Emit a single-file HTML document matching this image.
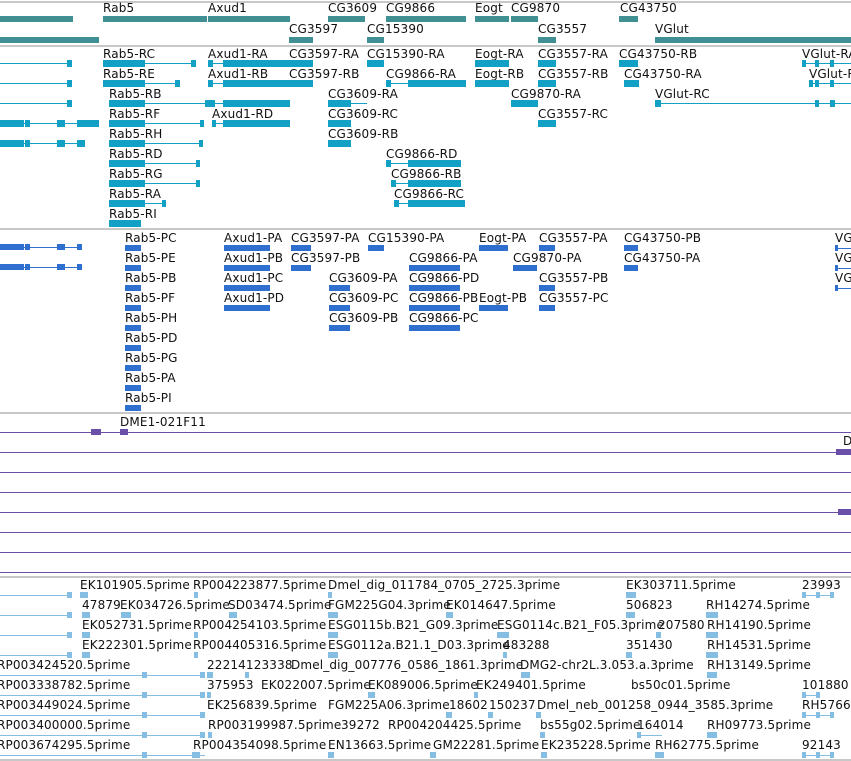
<!DOCTYPE html>
<html><head><meta charset="utf-8"><style>
html,body{margin:0;padding:0;background:#fff;}
body{width:851px;height:761px;position:relative;overflow:hidden;font-family:"DejaVu Sans","Liberation Sans",sans-serif;font-size:12px;color:#111;}
.t{position:absolute;line-height:14px;white-space:nowrap;letter-spacing:0.15px;}
i{position:absolute;display:block;}
.s{left:0;width:851px;height:2px;background:#c8c8c8;}
.g{background:#3f8f93;height:6px;}
.tl{background:#12a0c4;height:1px;}
.tb{background:#12a0c4;height:7px;}
.cl{background:#2f6fd0;height:1px;}
.cb{background:#2f6fd0;height:6px;}
.pl{background:#6a4fa8;height:1px;}
.pb{background:#6a4fa8;height:6px;}
.el{background:#86bde2;height:1px;}
.eb{background:#86bde2;height:6px;}
</style></head><body>
<i class="s" style="top:1px"></i>
<i class="s" style="top:45px"></i>
<i class="s" style="top:228px"></i>
<i class="s" style="top:412px"></i>
<i class="s" style="top:576px"></i>
<i class="s" style="top:759px"></i>

<div class="t" style="left:103px;top:1px">Rab5</div>
<div class="t" style="left:208px;top:1px">Axud1</div>
<div class="t" style="left:328px;top:1px">CG3609</div>
<div class="t" style="left:386px;top:1px">CG9866</div>
<div class="t" style="left:475px;top:1px">Eogt</div>
<div class="t" style="left:511px;top:1px">CG9870</div>
<div class="t" style="left:620px;top:1px">CG43750</div>
<i class="g" style="left:0;top:16px;width:73px"></i>
<i class="g" style="left:103px;top:16px;width:104px"></i>
<i class="g" style="left:208px;top:16px;width:82px"></i>
<i class="g" style="left:328px;top:16px;width:37px"></i>
<i class="g" style="left:386px;top:16px;width:80px"></i>
<i class="g" style="left:475px;top:16px;width:34px"></i>
<i class="g" style="left:511px;top:16px;width:27px"></i>
<i class="g" style="left:619px;top:16px;width:19px"></i>
<div class="t" style="left:289px;top:22px">CG3597</div>
<div class="t" style="left:367px;top:22px">CG15390</div>
<div class="t" style="left:538px;top:22px">CG3557</div>
<div class="t" style="left:655px;top:22px">VGlut</div>
<i class="g" style="left:0;top:37px;width:99px"></i>
<i class="g" style="left:289px;top:37px;width:24px"></i>
<i class="g" style="left:367px;top:37px;width:17px"></i>
<i class="g" style="left:538px;top:37px;width:18px"></i>
<i class="g" style="left:655px;top:37px;width:196px"></i>

<i class="tl" style="left:0;top:63px;width:72px"></i><i class="tb" style="left:67px;top:60px;width:5px"></i>
<div class="t" style="left:103px;top:47px">Rab5-RC</div><i class="tb" style="left:103px;top:60px;width:42px"></i><i class="tl" style="left:103px;top:63px;width:93px"></i><i class="tb" style="left:191px;top:60px;width:5px"></i>
<div class="t" style="left:208px;top:47px">Axud1-RA</div><i class="tl" style="left:208px;top:63px;width:15px"></i><i class="tb" style="left:208px;top:60px;width:5px"></i><i class="tb" style="left:223px;top:60px;width:67px"></i>
<div class="t" style="left:289px;top:47px">CG3597-RA</div><i class="tb" style="left:289px;top:60px;width:24px"></i>
<div class="t" style="left:367px;top:47px">CG15390-RA</div><i class="tb" style="left:367px;top:60px;width:17px"></i>
<div class="t" style="left:475px;top:47px">Eogt-RA</div><i class="tb" style="left:475px;top:60px;width:34px"></i>
<div class="t" style="left:538px;top:47px">CG3557-RA</div><i class="tb" style="left:538px;top:60px;width:18px"></i>
<div class="t" style="left:619px;top:47px">CG43750-RB</div><i class="tb" style="left:619px;top:60px;width:19px"></i>
<div class="t" style="left:802px;top:47px">VGlut-RA</div><i class="tl" style="left:802px;top:63px;width:49px"></i><i class="tb" style="left:802px;top:60px;width:4px"></i><i class="tb" style="left:815px;top:60px;width:4px"></i><i class="tb" style="left:830px;top:60px;width:4px"></i>
<i class="tl" style="left:0;top:83px;width:72px"></i><i class="tb" style="left:67px;top:80px;width:5px"></i>
<div class="t" style="left:103px;top:67px">Rab5-RE</div><i class="tb" style="left:103px;top:80px;width:42px"></i><i class="tl" style="left:103px;top:83px;width:77px"></i><i class="tb" style="left:175px;top:80px;width:5px"></i>
<div class="t" style="left:208px;top:67px">Axud1-RB</div><i class="tl" style="left:208px;top:83px;width:15px"></i><i class="tb" style="left:208px;top:80px;width:5px"></i><i class="tb" style="left:223px;top:80px;width:67px"></i>
<div class="t" style="left:289px;top:67px">CG3597-RB</div><i class="tb" style="left:289px;top:80px;width:24px"></i>
<div class="t" style="left:386px;top:67px">CG9866-RA</div><i class="tl" style="left:386px;top:83px;width:80px"></i><i class="tb" style="left:386px;top:80px;width:5px"></i><i class="tb" style="left:408px;top:80px;width:58px"></i>
<div class="t" style="left:475px;top:67px">Eogt-RB</div><i class="tb" style="left:475px;top:80px;width:34px"></i>
<div class="t" style="left:538px;top:67px">CG3557-RB</div><i class="tb" style="left:538px;top:80px;width:18px"></i>
<div class="t" style="left:624px;top:67px">CG43750-RA</div><i class="tb" style="left:624px;top:80px;width:15px"></i>
<div class="t" style="left:809px;top:67px">VGlut-RB</div><i class="tl" style="left:809px;top:83px;width:42px"></i><i class="tb" style="left:809px;top:80px;width:4px"></i><i class="tb" style="left:815px;top:80px;width:4px"></i><i class="tb" style="left:830px;top:80px;width:4px"></i>
<i class="tl" style="left:0;top:103px;width:72px"></i><i class="tb" style="left:67px;top:100px;width:5px"></i>
<div class="t" style="left:109px;top:87px">Rab5-RB</div><i class="tl" style="left:109px;top:103px;width:181px"></i><i class="tb" style="left:109px;top:100px;width:36px"></i><i class="tb" style="left:205px;top:100px;width:10px"></i><i class="tb" style="left:223px;top:100px;width:67px"></i>
<div class="t" style="left:328px;top:87px">CG3609-RA</div><i class="tl" style="left:328px;top:103px;width:39px"></i><i class="tb" style="left:328px;top:100px;width:23px"></i>
<div class="t" style="left:511px;top:87px">CG9870-RA</div><i class="tb" style="left:511px;top:100px;width:27px"></i>
<div class="t" style="left:655px;top:87px">VGlut-RC</div><i class="tl" style="left:655px;top:103px;width:196px"></i><i class="tb" style="left:655px;top:100px;width:6px"></i><i class="tb" style="left:815px;top:100px;width:4px"></i><i class="tb" style="left:830px;top:100px;width:5px"></i>
<i class="tl" style="left:0;top:123px;width:99px"></i><i class="tb" style="left:0;top:120px;width:24px"></i><i class="tb" style="left:25px;top:120px;width:5px"></i><i class="tb" style="left:57px;top:120px;width:8px"></i><i class="tb" style="left:77px;top:120px;width:22px"></i>
<div class="t" style="left:109px;top:107px">Rab5-RF</div><i class="tl" style="left:109px;top:123px;width:95px"></i><i class="tb" style="left:109px;top:120px;width:36px"></i><i class="tb" style="left:200px;top:120px;width:4px"></i>
<div class="t" style="left:212px;top:107px">Axud1-RD</div><i class="tl" style="left:212px;top:123px;width:11px"></i><i class="tb" style="left:212px;top:120px;width:4px"></i><i class="tb" style="left:223px;top:120px;width:67px"></i>
<div class="t" style="left:328px;top:107px">CG3609-RC</div><i class="tb" style="left:328px;top:120px;width:23px"></i>
<div class="t" style="left:538px;top:107px">CG3557-RC</div><i class="tb" style="left:538px;top:120px;width:18px"></i>
<i class="tl" style="left:0;top:143px;width:85px"></i><i class="tb" style="left:0;top:140px;width:24px"></i><i class="tb" style="left:25px;top:140px;width:5px"></i><i class="tb" style="left:57px;top:140px;width:8px"></i><i class="tb" style="left:77px;top:140px;width:8px"></i>
<div class="t" style="left:109px;top:127px">Rab5-RH</div><i class="tl" style="left:109px;top:143px;width:94px"></i><i class="tb" style="left:109px;top:140px;width:36px"></i><i class="tb" style="left:199px;top:140px;width:4px"></i>
<div class="t" style="left:328px;top:127px">CG3609-RB</div><i class="tb" style="left:328px;top:140px;width:23px"></i>
<div class="t" style="left:109px;top:147px">Rab5-RD</div><i class="tl" style="left:109px;top:163px;width:91px"></i><i class="tb" style="left:109px;top:160px;width:36px"></i><i class="tb" style="left:196px;top:160px;width:4px"></i>
<div class="t" style="left:386px;top:147px">CG9866-RD</div><i class="tl" style="left:386px;top:163px;width:75px"></i><i class="tb" style="left:386px;top:160px;width:5px"></i><i class="tb" style="left:408px;top:160px;width:53px"></i>
<div class="t" style="left:109px;top:167px">Rab5-RG</div><i class="tl" style="left:109px;top:183px;width:91px"></i><i class="tb" style="left:109px;top:180px;width:36px"></i><i class="tb" style="left:196px;top:180px;width:4px"></i>
<div class="t" style="left:391px;top:167px">CG9866-RB</div><i class="tl" style="left:391px;top:183px;width:70px"></i><i class="tb" style="left:391px;top:180px;width:5px"></i><i class="tb" style="left:408px;top:180px;width:53px"></i>
<div class="t" style="left:109px;top:187px">Rab5-RA</div><i class="tl" style="left:109px;top:203px;width:57px"></i><i class="tb" style="left:109px;top:200px;width:36px"></i><i class="tb" style="left:162px;top:200px;width:4px"></i>
<div class="t" style="left:394px;top:187px">CG9866-RC</div><i class="tl" style="left:394px;top:203px;width:71px"></i><i class="tb" style="left:394px;top:200px;width:5px"></i><i class="tb" style="left:408px;top:200px;width:57px"></i>
<div class="t" style="left:109px;top:207px">Rab5-RI</div><i class="tb" style="left:109px;top:220px;width:32px"></i>

<i class="cl" style="left:0;top:247px;width:82px"></i><i class="cb" style="left:0;top:244px;width:24px"></i><i class="cb" style="left:25px;top:244px;width:5px"></i><i class="cb" style="left:57px;top:244px;width:8px"></i><i class="cb" style="left:77px;top:244px;width:5px"></i>
<i class="cl" style="left:0;top:267px;width:82px"></i><i class="cb" style="left:0;top:264px;width:24px"></i><i class="cb" style="left:25px;top:264px;width:5px"></i><i class="cb" style="left:57px;top:264px;width:8px"></i><i class="cb" style="left:77px;top:264px;width:5px"></i>
<div class="t" style="left:125px;top:231px">Rab5-PC</div><i class="cb" style="left:125px;top:245px;width:16px"></i>
<div class="t" style="left:125px;top:251px">Rab5-PE</div><i class="cb" style="left:125px;top:265px;width:16px"></i>
<div class="t" style="left:125px;top:271px">Rab5-PB</div><i class="cb" style="left:125px;top:285px;width:16px"></i>
<div class="t" style="left:125px;top:291px">Rab5-PF</div><i class="cb" style="left:125px;top:305px;width:16px"></i>
<div class="t" style="left:125px;top:311px">Rab5-PH</div><i class="cb" style="left:125px;top:325px;width:16px"></i>
<div class="t" style="left:125px;top:331px">Rab5-PD</div><i class="cb" style="left:125px;top:345px;width:16px"></i>
<div class="t" style="left:125px;top:351px">Rab5-PG</div><i class="cb" style="left:125px;top:365px;width:16px"></i>
<div class="t" style="left:125px;top:371px">Rab5-PA</div><i class="cb" style="left:125px;top:385px;width:16px"></i>
<div class="t" style="left:125px;top:391px">Rab5-PI</div><i class="cb" style="left:125px;top:405px;width:16px"></i>
<div class="t" style="left:224px;top:231px">Axud1-PA</div><i class="cb" style="left:224px;top:245px;width:46px"></i>
<div class="t" style="left:224px;top:251px">Axud1-PB</div><i class="cb" style="left:224px;top:265px;width:46px"></i>
<div class="t" style="left:224px;top:271px">Axud1-PC</div><i class="cb" style="left:224px;top:285px;width:46px"></i>
<div class="t" style="left:224px;top:291px">Axud1-PD</div><i class="cb" style="left:224px;top:305px;width:46px"></i>
<div class="t" style="left:291px;top:231px">CG3597-PA</div><i class="cb" style="left:291px;top:245px;width:20px"></i>
<div class="t" style="left:291px;top:251px">CG3597-PB</div><i class="cb" style="left:291px;top:265px;width:20px"></i>
<div class="t" style="left:368px;top:231px">CG15390-PA</div><i class="cb" style="left:368px;top:245px;width:16px"></i>
<div class="t" style="left:329px;top:271px">CG3609-PA</div><i class="cb" style="left:329px;top:285px;width:21px"></i>
<div class="t" style="left:329px;top:291px">CG3609-PC</div><i class="cb" style="left:329px;top:305px;width:21px"></i>
<div class="t" style="left:329px;top:311px">CG3609-PB</div><i class="cb" style="left:329px;top:325px;width:21px"></i>
<div class="t" style="left:409px;top:251px">CG9866-PA</div><i class="cb" style="left:409px;top:265px;width:51px"></i>
<div class="t" style="left:409px;top:271px">CG9866-PD</div><i class="cb" style="left:409px;top:285px;width:51px"></i>
<div class="t" style="left:409px;top:291px">CG9866-PB</div><i class="cb" style="left:409px;top:305px;width:51px"></i>
<div class="t" style="left:409px;top:311px">CG9866-PC</div><i class="cb" style="left:409px;top:325px;width:51px"></i>
<div class="t" style="left:479px;top:231px">Eogt-PA</div><i class="cb" style="left:479px;top:245px;width:29px"></i>
<div class="t" style="left:479px;top:291px">Eogt-PB</div><i class="cb" style="left:479px;top:305px;width:29px"></i>
<div class="t" style="left:513px;top:251px">CG9870-PA</div><i class="cb" style="left:513px;top:265px;width:24px"></i>
<div class="t" style="left:539px;top:231px">CG3557-PA</div><i class="cb" style="left:539px;top:245px;width:16px"></i>
<div class="t" style="left:539px;top:271px">CG3557-PB</div><i class="cb" style="left:539px;top:285px;width:16px"></i>
<div class="t" style="left:539px;top:291px">CG3557-PC</div><i class="cb" style="left:539px;top:305px;width:16px"></i>
<div class="t" style="left:624px;top:231px">CG43750-PB</div><i class="cb" style="left:624px;top:245px;width:14px"></i>
<div class="t" style="left:624px;top:251px">CG43750-PA</div><i class="cb" style="left:624px;top:265px;width:14px"></i>
<div class="t" style="left:835px;top:231px">VG</div><i class="cl" style="left:835px;top:248px;width:16px"></i><i class="cb" style="left:835px;top:245px;width:3px"></i>
<div class="t" style="left:835px;top:251px">VG</div><i class="cl" style="left:835px;top:268px;width:16px"></i><i class="cb" style="left:835px;top:265px;width:3px"></i>
<div class="t" style="left:835px;top:271px">VG</div><i class="cl" style="left:835px;top:288px;width:16px"></i><i class="cb" style="left:835px;top:285px;width:3px"></i>

<div class="t" style="left:120px;top:415px">DME1-021F11</div>
<div class="t" style="left:843px;top:434px">D</div>
<i class="pl" style="left:0;top:432px;width:851px"></i><i class="pb" style="left:91px;top:429px;width:10px"></i><i class="pb" style="left:120px;top:429px;width:8px"></i>
<i class="pl" style="left:0;top:452px;width:851px"></i><i class="pb" style="left:836px;top:449px;width:15px"></i>
<i class="pl" style="left:0;top:472px;width:851px"></i>
<i class="pl" style="left:0;top:492px;width:851px"></i>
<i class="pl" style="left:0;top:512px;width:851px"></i><i class="pb" style="left:838px;top:509px;width:13px"></i>
<i class="pl" style="left:0;top:532px;width:851px"></i>
<i class="pl" style="left:0;top:552px;width:851px"></i>
<i class="pl" style="left:0;top:572px;width:851px"></i>

<i class="el" style="left:0;top:595px;width:72px"></i><i class="eb" style="left:67px;top:592px;width:5px"></i>
<i class="el" style="left:0;top:615px;width:72px"></i><i class="eb" style="left:67px;top:612px;width:5px"></i>
<i class="el" style="left:0;top:635px;width:72px"></i><i class="eb" style="left:67px;top:632px;width:5px"></i>
<i class="el" style="left:0;top:655px;width:72px"></i><i class="eb" style="left:67px;top:652px;width:5px"></i>
<i class="el" style="left:0;top:675px;width:205px"></i><i class="eb" style="left:142px;top:672px;width:5px"></i><i class="eb" style="left:200px;top:672px;width:5px"></i>
<i class="el" style="left:0;top:695px;width:205px"></i><i class="eb" style="left:142px;top:692px;width:5px"></i><i class="eb" style="left:200px;top:692px;width:5px"></i>
<i class="el" style="left:0;top:715px;width:205px"></i><i class="eb" style="left:142px;top:712px;width:5px"></i><i class="eb" style="left:200px;top:712px;width:5px"></i>
<i class="el" style="left:0;top:735px;width:205px"></i><i class="eb" style="left:142px;top:732px;width:5px"></i><i class="eb" style="left:200px;top:732px;width:5px"></i>
<i class="el" style="left:0;top:755px;width:205px"></i><i class="eb" style="left:142px;top:752px;width:5px"></i><i class="eb" style="left:192px;top:752px;width:8px"></i>

<div class="t" style="left:80px;top:578px">EK101905.5prime</div><i class="eb" style="left:80px;top:592px;width:8px"></i>
<div class="t" style="left:193px;top:578px">RP004223877.5prime</div><i class="eb" style="left:194px;top:592px;width:4px"></i>
<div class="t" style="left:328px;top:578px">Dmel_dig_011784_0705_2725.3prime</div><i class="eb" style="left:328px;top:592px;width:4px"></i>
<div class="t" style="left:626px;top:578px">EK303711.5prime</div><i class="eb" style="left:626px;top:592px;width:10px"></i>
<div class="t" style="left:802px;top:578px">23993</div><i class="el" style="left:802px;top:595px;width:32px"></i><i class="eb" style="left:802px;top:592px;width:4px"></i><i class="eb" style="left:816px;top:592px;width:4px"></i><i class="eb" style="left:830px;top:592px;width:4px"></i>

<div class="t" style="left:82px;top:598px">47879</div><i class="eb" style="left:82px;top:612px;width:8px"></i>
<div class="t" style="left:120px;top:598px">EK034726.5prime</div><i class="eb" style="left:121px;top:612px;width:10px"></i>
<div class="t" style="left:228px;top:598px">SD03474.5prime</div><i class="eb" style="left:229px;top:612px;width:8px"></i>
<div class="t" style="left:328px;top:598px">FGM225G04.3prime</div><i class="eb" style="left:328px;top:612px;width:10px"></i>
<div class="t" style="left:446px;top:598px">EK014647.5prime</div><i class="eb" style="left:446px;top:612px;width:7px"></i>
<div class="t" style="left:626px;top:598px">506823</div><i class="eb" style="left:626px;top:612px;width:9px"></i>
<div class="t" style="left:706px;top:598px">RH14274.5prime</div><i class="eb" style="left:706px;top:612px;width:12px"></i>

<div class="t" style="left:82px;top:618px">EK052731.5prime</div><i class="eb" style="left:82px;top:632px;width:8px"></i>
<div class="t" style="left:193px;top:618px">RP004254103.5prime</div><i class="eb" style="left:194px;top:632px;width:4px"></i>
<div class="t" style="left:328px;top:618px">ESG0115b.B21_G09.3prime</div><i class="eb" style="left:328px;top:632px;width:10px"></i>
<div class="t" style="left:497px;top:618px">ESG0114c.B21_F05.3prime</div><i class="eb" style="left:497px;top:632px;width:12px"></i>
<div class="t" style="left:658px;top:618px">207580</div><i class="eb" style="left:656px;top:632px;width:5px"></i>
<div class="t" style="left:707px;top:618px">RH14190.5prime</div><i class="eb" style="left:706px;top:632px;width:12px"></i>

<div class="t" style="left:82px;top:638px">EK222301.5prime</div><i class="eb" style="left:82px;top:652px;width:8px"></i>
<div class="t" style="left:193px;top:638px">RP004405316.5prime</div><i class="eb" style="left:194px;top:652px;width:4px"></i>
<div class="t" style="left:328px;top:638px">ESG0112a.B21.1_D03.3prime</div><i class="eb" style="left:328px;top:652px;width:10px"></i>
<div class="t" style="left:503px;top:638px">483288</div><i class="eb" style="left:503px;top:652px;width:4px"></i>
<div class="t" style="left:626px;top:638px">351430</div><i class="eb" style="left:626px;top:652px;width:6px"></i>
<div class="t" style="left:707px;top:638px">RH14531.5prime</div><i class="eb" style="left:706px;top:652px;width:12px"></i>

<div class="t" style="left:-3px;top:658px">RP003424520.5prime</div>
<div class="t" style="left:207px;top:658px">22214123338</div><i class="eb" style="left:207px;top:672px;width:6px"></i><i class="eb" style="left:245px;top:672px;width:4px"></i>
<div class="t" style="left:291px;top:658px">Dmel_dig_007776_0586_1861.3prime</div>
<div class="t" style="left:520px;top:658px">DMG2-chr2L.3.053.a.3prime</div><i class="eb" style="left:521px;top:672px;width:9px"></i>
<div class="t" style="left:707px;top:658px">RH13149.5prime</div><i class="eb" style="left:707px;top:672px;width:10px"></i>

<div class="t" style="left:-3px;top:678px">RP003338782.5prime</div>
<div class="t" style="left:207px;top:678px">375953</div><i class="eb" style="left:207px;top:692px;width:4px"></i>
<div class="t" style="left:261px;top:678px">EK022007.5prime</div>
<div class="t" style="left:368px;top:678px">EK089006.5prime</div><i class="eb" style="left:368px;top:692px;width:7px"></i>
<div class="t" style="left:476px;top:678px">EK249401.5prime</div><i class="eb" style="left:474px;top:692px;width:4px"></i>
<div class="t" style="left:631px;top:678px">bs50c01.5prime</div>
<div class="t" style="left:802px;top:678px">101880</div><i class="el" style="left:802px;top:695px;width:18px"></i><i class="eb" style="left:802px;top:692px;width:4px"></i><i class="eb" style="left:816px;top:692px;width:4px"></i>

<div class="t" style="left:-3px;top:698px">RP003449024.5prime</div>
<div class="t" style="left:207px;top:698px">EK256839.5prime</div>
<div class="t" style="left:328px;top:698px">FGM225A06.3prime</div>
<div class="t" style="left:449px;top:698px">18602</div><i class="eb" style="left:446px;top:712px;width:6px"></i>
<div class="t" style="left:489px;top:698px">150237</div><i class="eb" style="left:488px;top:712px;width:5px"></i>
<div class="t" style="left:537px;top:698px">Dmel_neb_001258_0944_3585.3prime</div><i class="eb" style="left:536px;top:712px;width:5px"></i>
<div class="t" style="left:802px;top:698px">RH5766</div><i class="el" style="left:802px;top:715px;width:32px"></i><i class="eb" style="left:802px;top:712px;width:4px"></i><i class="eb" style="left:816px;top:712px;width:4px"></i><i class="eb" style="left:830px;top:712px;width:4px"></i>

<div class="t" style="left:-3px;top:718px">RP003400000.5prime</div>
<div class="t" style="left:208px;top:718px">RP003199987.5prime</div><i class="eb" style="left:208px;top:732px;width:4px"></i>
<div class="t" style="left:341px;top:718px">39272</div>
<div class="t" style="left:388px;top:718px">RP004204425.5prime</div>
<div class="t" style="left:540px;top:718px">bs55g02.5prime</div><i class="eb" style="left:540px;top:732px;width:5px"></i>
<div class="t" style="left:637px;top:718px">164014</div><i class="el" style="left:637px;top:735px;width:25px"></i><i class="eb" style="left:637px;top:732px;width:4px"></i>
<div class="t" style="left:707px;top:718px">RH09773.5prime</div><i class="eb" style="left:707px;top:732px;width:10px"></i>

<div class="t" style="left:-3px;top:738px">RP003674295.5prime</div>
<div class="t" style="left:193px;top:738px">RP004354098.5prime</div>
<div class="t" style="left:328px;top:738px">EN13663.5prime</div><i class="eb" style="left:328px;top:752px;width:6px"></i>
<div class="t" style="left:433px;top:738px">GM22281.5prime</div><i class="eb" style="left:430px;top:752px;width:6px"></i>
<div class="t" style="left:541px;top:738px">EK235228.5prime</div><i class="eb" style="left:541px;top:752px;width:6px"></i>
<div class="t" style="left:655px;top:738px">RH62775.5prime</div><i class="eb" style="left:655px;top:752px;width:9px"></i>
<div class="t" style="left:802px;top:738px">92143</div><i class="el" style="left:802px;top:755px;width:32px"></i><i class="eb" style="left:802px;top:752px;width:4px"></i><i class="eb" style="left:816px;top:752px;width:4px"></i><i class="eb" style="left:830px;top:752px;width:4px"></i>
</body></html>
